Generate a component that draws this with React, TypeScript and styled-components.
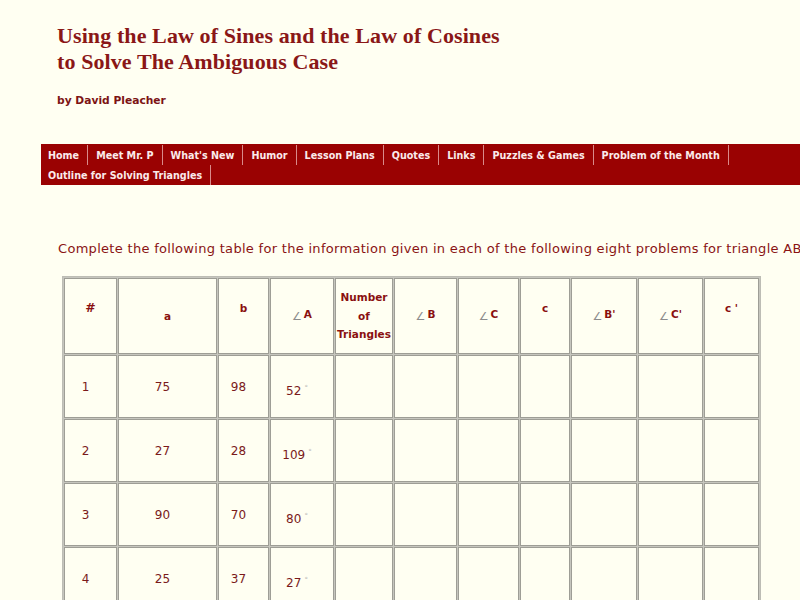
import React from "react";
import styled, { createGlobalStyle } from "styled-components";

const GlobalStyle = createGlobalStyle`
  html, body {
    margin: 0;
    padding: 0;
    background: #fffff2;
    overflow: hidden;
  }
`;

const Page = styled.div`
  width: 800px;
  height: 600px;
  overflow: hidden;
`;

const Header = styled.header`
  padding-left: 57px;
`;

const Title = styled.h1`
  margin: 23px 0 0;
  font-family: "Liberation Serif", "Times New Roman", serif;
  font-weight: bold;
  font-size: 22px;
  letter-spacing: 0.1px;
  line-height: 26px;
  color: #8a1717;
`;

const Byline = styled.div`
  margin-top: 19px;
  font-family: "DejaVu Sans", sans-serif;
  font-weight: bold;
  font-size: 10.7px;
  line-height: 14px;
  color: #7c1414;
`;

const Nav = styled.nav`
  margin: 36px 0 0 41px;
  padding: 1px 0 0;
  background: #9a0202;
  display: flex;
  flex-wrap: wrap;
`;

const NavItem = styled.a<{ $first?: boolean }>`
  display: block;
  height: 20px;
  line-height: 21px;
  padding: 0 8px 0 ${(p) => (p.$first ? "7px" : "8px")};
  border-right: 1px solid #d98a8a;
  font-family: "DejaVu Sans", sans-serif;
  font-weight: bold;
  font-size: 9.6px;
  color: #fbeaea;
  text-decoration: none;
  white-space: nowrap;
`;

const Instruction = styled.p`
  margin: 55px 0 0 58px;
  font-family: "DejaVu Sans", sans-serif;
  font-size: 13px;
  letter-spacing: 0.3px;
  line-height: 17px;
  color: #8a1414;
  white-space: nowrap;
`;

const Table = styled.table`
  margin: 19px 0 0 62px;
  border: 1px solid #bdbdb5;
  border-spacing: 1px;
  background: #c6c6be;
  table-layout: fixed;
`;

const HeadCell = styled.th<{ $w: number; $raised?: boolean }>`
  box-sizing: border-box;
  width: ${(p) => p.$w}px;
  height: 76px;
  padding: 0 0 ${(p) => (p.$raised ? "16px" : "0")};
  border: 1px solid #9e9e96;
  background: #fffff2;
  text-align: center;
  vertical-align: middle;
  font-family: "DejaVu Sans", sans-serif;
  font-weight: bold;
  font-size: 10.5px;
  line-height: 18.5px;
  color: #8a1010;
`;

const Cell = styled.td<{ $low?: boolean }>`
  box-sizing: border-box;
  height: 63px;
  padding: ${(p) => (p.$low ? "9px" : "0")} 10px 0 0;
  border: 1px solid #9e9e96;
  background: #fffff2;
  text-align: center;
  vertical-align: middle;
  font-family: "DejaVu Sans", sans-serif;
  font-size: 12px;
  color: #7a1a1a;
`;

const Angle = styled.span`
  font-family: "DejaVu Sans", sans-serif;
  font-weight: normal;
  font-size: 11px;
  color: #8c8c8c;
  margin-right: 2px;
  vertical-align: -2px;
`;

const Hash = styled.span`
  font-size: 12.5px;
`;

const Degree = styled.sup`
  font-size: 7px;
  color: #b8b8b8;
  margin-left: 3px;
`;

const navItems = [
  "Home",
  "Meet Mr. P",
  "What's New",
  "Humor",
  "Lesson Plans",
  "Quotes",
  "Links",
  "Puzzles & Games",
  "Problem of the Month",
  "Outline for Solving Triangles",
];

const widths = [53, 99, 51, 64, 58, 63, 61, 50, 66, 65, 55];

const rows: [string, string, string, string][] = [
  ["1", "75", "98", "52"],
  ["2", "27", "28", "109"],
  ["3", "90", "70", "80"],
  ["4", "25", "37", "27"],
];

export default function App() {
  return (
    <Page>
      <GlobalStyle />
      <Header>
        <Title>
          Using the Law of Sines and the Law of Cosines
          <br />
          to Solve The Ambiguous Case
        </Title>
        <Byline>by David Pleacher</Byline>
      </Header>
      <Nav>
        {navItems.map((item, i) => (
          <NavItem key={item} href="#" $first={i === 0 || i === 9}>
            {item}
          </NavItem>
        ))}
      </Nav>
      <Instruction>
        Complete the following table for the information given in each of the
        following eight problems for triangle ABC.
      </Instruction>
      <Table>
        <thead>
          <tr>
            <HeadCell $w={widths[0]} $raised>
              <Hash>#</Hash>
            </HeadCell>
            <HeadCell $w={widths[1]}>a</HeadCell>
            <HeadCell $w={widths[2]} $raised>
              b
            </HeadCell>
            <HeadCell $w={widths[3]}>
              <Angle>∠</Angle>A
            </HeadCell>
            <HeadCell $w={widths[4]}>
              Number
              <br />
              of
              <br />
              Triangles
            </HeadCell>
            <HeadCell $w={widths[5]}>
              <Angle>∠</Angle>B
            </HeadCell>
            <HeadCell $w={widths[6]}>
              <Angle>∠</Angle>C
            </HeadCell>
            <HeadCell $w={widths[7]} $raised>
              c
            </HeadCell>
            <HeadCell $w={widths[8]}>
              <Angle>∠</Angle>B'
            </HeadCell>
            <HeadCell $w={widths[9]}>
              <Angle>∠</Angle>C'
            </HeadCell>
            <HeadCell $w={widths[10]} $raised>
              c '
            </HeadCell>
          </tr>
        </thead>
        <tbody>
          {rows.map((r) => (
            <tr key={r[0]}>
              <Cell>{r[0]}</Cell>
              <Cell>{r[1]}</Cell>
              <Cell>{r[2]}</Cell>
              <Cell $low>
                {r[3]}
                <Degree>°</Degree>
              </Cell>
              {Array.from({ length: 7 }).map((_, i) => (
                <Cell key={i} />
              ))}
            </tr>
          ))}
        </tbody>
      </Table>
    </Page>
  );
}
